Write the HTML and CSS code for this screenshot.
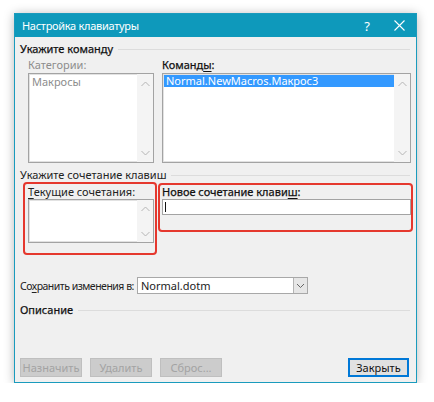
FILE: index.html
```html
<!DOCTYPE html>
<html lang="ru">
<head>
<meta charset="utf-8">
<title>Настройка клавиатуры</title>
<link rel="stylesheet" href="styles.css">
</head>
<body>
<div class="window">
  <div class="titlebar">
    <span class="title">Настройка клавиатуры</span>
    <span class="help">?</span>
    <svg class="close" width="11" height="11" viewBox="0 0 11 11"><path d="M0.5 0.5 L10.5 10.5 M10.5 0.5 L0.5 10.5" stroke="#fff" stroke-width="1.1" fill="none"/></svg>
  </div>
  <div class="body">
    <div class="group-head head"><span>Укажите команду</span><i class="rule"></i></div>
    <div class="cmd-grid">
      <div class="lbl disabled">Категории:</div>
      <div class="lbl head">Команд<u>ы</u>:</div>
      <div class="listbox disabled">
        <div class="items"><div class="item">Макросы</div></div>
        <div class="sb">
          <svg width="9" height="6" viewBox="0 0 9 6"><path d="M0.5 5 L4.5 1 L8.5 5" stroke="#b5b5b5" fill="none"/></svg>
          <svg width="9" height="6" viewBox="0 0 9 6"><path d="M0.5 1 L4.5 5 L8.5 1" stroke="#b5b5b5" fill="none"/></svg>
        </div>
      </div>
      <div class="listbox">
        <div class="items"><div class="item sel">Normal.NewMacros.Макрос3</div></div>
        <div class="sb">
          <svg width="9" height="6" viewBox="0 0 9 6"><path d="M0.5 5 L4.5 1 L8.5 5" stroke="#b5b5b5" fill="none"/></svg>
          <svg width="9" height="6" viewBox="0 0 9 6"><path d="M0.5 1 L4.5 5 L8.5 1" stroke="#b5b5b5" fill="none"/></svg>
        </div>
      </div>
    </div>
    <div class="group-head"><span>Укажите сочетание клавиш</span><i class="rule"></i></div>
    <div class="keys-grid">
      <div class="mark mark-a"></div>
      <div class="mark mark-b"></div>
      <div class="lbl"><u>Т</u>екущие сочетания:</div>
      <div class="lbl head">Новое сочетание клави<u>ш</u>:</div>
      <div class="listbox small">
        <div class="items"></div>
        <div class="sb">
          <svg width="9" height="6" viewBox="0 0 9 6"><path d="M0.5 5 L4.5 1 L8.5 5" stroke="#b5b5b5" fill="none"/></svg>
          <svg width="9" height="6" viewBox="0 0 9 6"><path d="M0.5 1 L4.5 5 L8.5 1" stroke="#b5b5b5" fill="none"/></svg>
        </div>
      </div>
      <div class="input"><span class="caret"></span></div>
    </div>
    <div class="save-row">
      <div class="save-lbl">Со<u>х</u>ранить изменения в:</div>
      <div class="combo">
        <span class="combo-val">Normal.dotm</span>
        <span class="drop"><svg width="9" height="6" viewBox="0 0 9 6"><path d="M1 1 L4.5 4.5 L8 1" stroke="#666" fill="none"/></svg></span>
      </div>
    </div>
    <div class="group-head head"><span>Описание</span><i class="rule"></i></div>
    <div class="buttons">
      <button class="btn" disabled>Назначить</button>
      <button class="btn" disabled>Удалить</button>
      <button class="btn" disabled>Сброс...</button>
      <button class="btn primary">Закрыть</button>
    </div>
  </div>
</div>
</body>
</html>
```
FILE: styles.css
```css
* { box-sizing: border-box; }
body {
  margin: 0;
  background: #fff;
  font-family: "Noto Sans", "Open Sans", sans-serif;
  font-size: 11px;
  color: #222;
}
.window {
  margin: 13px 0 0 14px;
  width: 403px;
  height: 370px;
  border: 1px solid #1a9bbd;
  background: #f0f0f0;
  box-shadow: 0 1px 10px rgba(0, 0, 0, 0.28);
  display: flex;
  flex-direction: column;
}
.titlebar {
  height: 23px;
  background: #0e99bb;
  color: #fff;
  display: flex;
  align-items: center;
  padding: 0 11px 0 7px;
}
.title { flex: 1; font-size: 11px; letter-spacing: -0.3px; }
.help { font-size: 13px; margin-right: 24px; }
.close { display: block; }
.body {
  flex: 1;
  display: flex;
  flex-direction: column;
  padding: 5px 6px 5px 5px;
}
.group-head {
  display: flex;
  align-items: center;
  gap: 5px;
  height: 14px;
  line-height: 14px;
  white-space: nowrap;
}
.rule { flex: 1; height: 1px; background: #dcdcdc; }
.head { color: #111; -webkit-text-stroke: 0.25px #111; }
.lbl { line-height: 14px; white-space: nowrap; }
.disabled { color: #8d8d8d; }
u { text-decoration-thickness: 1px; text-underline-offset: 2px; }

.cmd-grid {
  display: grid;
  grid-template-columns: 126px 249px;
  grid-template-rows: 15px 90px;
  column-gap: 8px;
  margin: 2px 0 0 8px;
}
.cmd-grid + .group-head { margin-top: 5px; }

.listbox {
  display: flex;
  background: #fff;
  border: 1px solid #a3a3a3;
  box-shadow: inset 0 0 0 1px #e2e2e2;
}
.items { flex: 1; padding: 1px 0 0 1px; }
.item { line-height: 12px; padding-left: 2px; white-space: nowrap; }
.listbox.disabled .item { color: #8d8d8d; padding-top: 1px; }
.item.sel { background: #3399ff; color: #fff; }
.sb {
  width: 16px;
  background: #f4f4f4;
  display: flex;
  flex-direction: column;
  justify-content: space-between;
  align-items: center;
  padding: 7px 0 6px;
}
.sb svg { display: block; }

.keys-grid {
  position: relative;
  display: grid;
  grid-template-columns: 126px 249px;
  grid-template-rows: 14px 44px;
  column-gap: 8px;
  margin: 3px 0 0 8px;
}
.listbox.small .sb { padding: 6px 0 5px; }
.input {
  height: 16px;
  background: #fff;
  border: 1px solid #a3a3a3;
  display: flex;
  align-items: center;
  padding-left: 2px;
}
.caret { width: 1px; height: 10px; background: #111; }
.mark {
  position: absolute;
  border: 2px solid #e5382e;
  border-radius: 4px;
  pointer-events: none;
}
.mark-a { left: -5px; top: -3px; width: 134px; height: 73px; }
.mark-b { left: 130px; top: -2px; width: 255px; height: 49px; }

.save-row {
  display: flex;
  align-items: center;
  margin-top: 34px;
  height: 17px;
}
.save-lbl {
  width: 117px;
  white-space: nowrap;
  font-size: 10.5px;
  letter-spacing: -0.5px;
  overflow: hidden;
}
.combo {
  width: 171px;
  height: 17px;
  display: flex;
  background: #fff;
  border: 1px solid #a8a8a8;
}
.combo-val { flex: 1; padding-left: 3px; line-height: 15px; }
.drop {
  width: 14px;
  background: #e6e6e6;
  border-left: 1px solid #b4b4b4;
  display: flex;
  align-items: center;
  justify-content: center;
}
.save-row + .group-head { margin-top: 9px; }

.buttons {
  margin-top: auto;
  display: flex;
  gap: 8px;
  padding-right: 1px;
}
.btn {
  width: 62px;
  height: 19px;
  font-family: inherit;
  font-size: 11px;
  padding: 0;
  background: #cccccc;
  border: 1px solid #bfbfbf;
  color: #a3a3a3;
}
.btn.primary {
  margin-left: auto;
  width: 61px;
  background: #e1e1e1;
  border: 2px solid #0078d7;
  color: #111;
}
```
